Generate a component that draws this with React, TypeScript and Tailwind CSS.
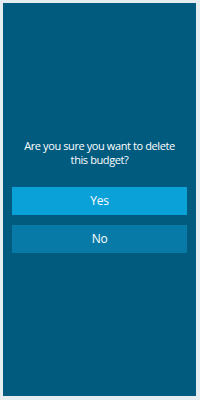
export default function App() {
  return (
    <div className="h-[400px] w-[200px] bg-[#e6edf1] pt-[3px] pl-[3px] pr-[4px] pb-[4px] font-['Open_Sans',sans-serif]">
      <div className="flex h-full flex-col bg-[#005b7f] px-[9px] pt-[136px]">
        <p className="text-center text-[11px] leading-[14px] tracking-[-0.4px] text-white">
          Are you sure you want to delete
          <br />
          this budget?
        </p>
        <button className="mt-[20px] h-[28px] w-full bg-[#0aa0d8] text-[12px] tracking-[-0.3px] text-white">
          Yes
        </button>
        <button className="mt-[10px] h-[28px] w-full bg-[#087aa8] text-[12px] tracking-[-0.3px] text-white">
          No
        </button>
      </div>
    </div>
  );
}
